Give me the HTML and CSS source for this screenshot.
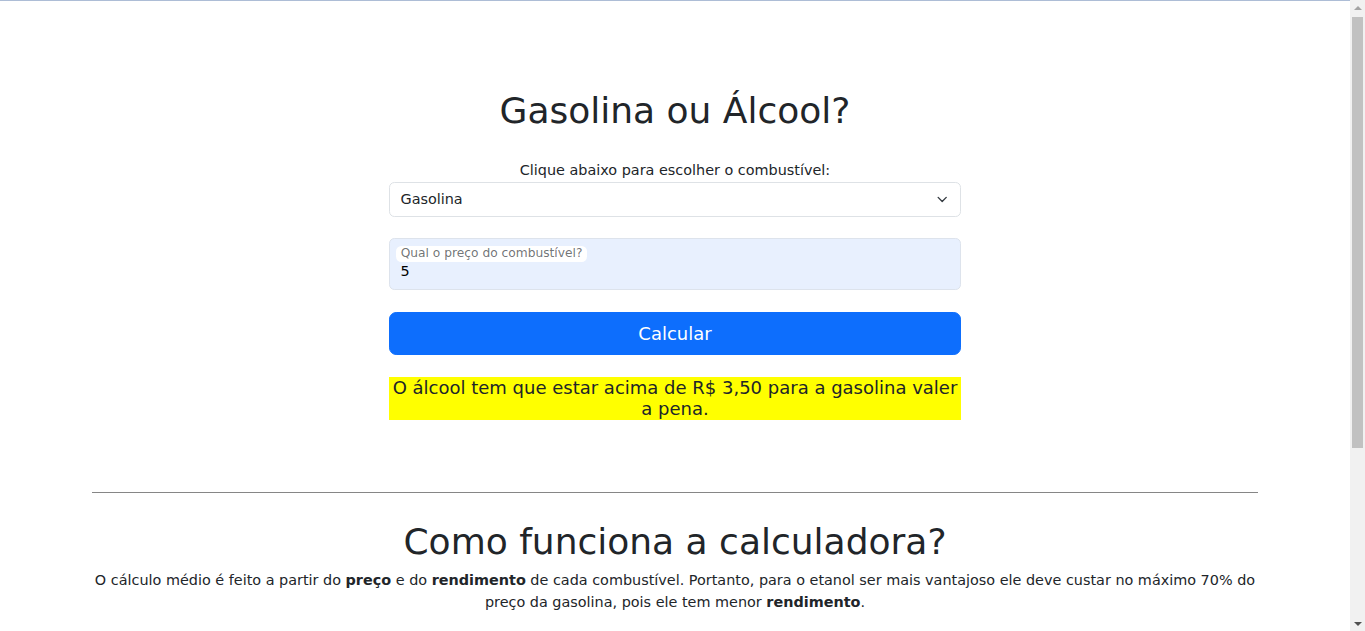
FILE: index.html
```html
<!DOCTYPE html>
<html lang="pt-BR">
<head>
<meta charset="utf-8">
<title>Gasolina ou Álcool?</title>
<link rel="stylesheet" href="styles.css">
</head>
<body>
<main class="page">
  <section class="calc">
    <h1 class="title">Gasolina ou Álcool?</h1>
    <div class="form">
      <label class="form-label">Clique abaixo para escolher o combustível:</label>
      <div class="select">
        <span>Gasolina</span>
        <svg class="chevron" width="14.4" height="10.8" viewBox="0 0 16 16" aria-hidden="true"><path d="m2 5 6 6 6-6" fill="none" stroke="#343a40" stroke-width="2" stroke-linecap="round" stroke-linejoin="round"/></svg>
      </div>
      <div class="floating">
        <span class="floating-label">Qual o preço do combustível?</span>
        <span class="floating-value">5</span>
      </div>
      <button class="btn" type="button">Calcular</button>
      <div class="result">O álcool tem que estar acima de R$ 3,50 para a gasolina valer a pena.</div>
    </div>
  </section>
  <hr class="divider">
  <section class="info">
    <h1 class="title info-title">Como funciona a calculadora?</h1>
    <p class="info-text">O cálculo médio é feito a partir do <strong>preço</strong> e do <strong>rendimento</strong> de cada combustível. Portanto, para o etanol ser mais vantajoso ele deve custar no máximo 70% do preço da gasolina, pois ele tem menor <strong>rendimento</strong>.</p>
  </section>
</main>
<div class="scrollbar" aria-hidden="true">
  <div class="sb-arrow sb-up"></div>
  <div class="sb-track"><div class="sb-thumb"></div></div>
  <div class="sb-arrow sb-down"></div>
</div>
</body>
</html>
```

FILE: styles.css
```css
html, body {
  margin: 0;
  padding: 0;
}

body {
  margin-right: 15px;
  border-top: 1px solid #adbdd6;
  background: #fff;
  color: #212529;
  font-family: "DejaVu Sans", sans-serif;
  font-size: 14.4px;
  line-height: 1.5;
}

.page {
  max-width: 1166.4px;
  margin: 0 auto;
  padding: 88.4px 0 267px;
}

.title {
  margin: 0 0 27.6px;
  font-size: 36px;
  font-weight: 400;
  line-height: 1.2;
  text-align: center;
}

.form {
  width: 572.6px;
  margin: 0 auto;
  display: flex;
  flex-direction: column;
}

.form-label {
  display: block;
  text-align: center;
  line-height: 21.6px;
  margin-bottom: 0.4px;
}

.select {
  display: flex;
  align-items: center;
  justify-content: space-between;
  height: 21.6px;
  padding: 5.4px 10.8px;
  border: 1px solid #dee2e6;
  border-radius: 5.4px;
  line-height: 21.6px;
  margin-bottom: 21.6px;
}

.chevron {
  display: block;
}

.floating {
  display: flex;
  flex-direction: column;
  align-items: flex-start;
  height: 37.2px;
  padding: 7px 6px 6px;
  border: 1px solid #dde3ec;
  border-radius: 5.4px;
  background: #e8f0fe;
  margin-bottom: 21.6px;
}

.floating-label {
  height: 16px;
  padding: 0 5px;
  background: #fff;
  border-radius: 5.4px;
  font-size: 12.24px;
  line-height: 15px;
  color: rgba(33, 37, 41, 0.65);
}

.floating-value {
  padding-left: 4.8px;
  margin-top: -1px;
  line-height: 21.6px;
  color: #000;
}

.btn {
  display: block;
  width: 100%;
  padding: 7.2px 14.4px;
  border: 1px solid #0d6efd;
  border-radius: 7.2px;
  background: #0d6efd;
  color: #fff;
  font-family: inherit;
  font-size: 18px;
  line-height: 27px;
  margin-bottom: 21.6px;
}

.result {
  background: #ffff00;
  font-size: 18px;
  line-height: 21.6px;
  text-align: center;
}

.divider {
  margin: 72.2px 0 0;
  border: 0;
  border-top: 1px solid #868686;
  height: 0;
}

.info-title {
  margin: 27px 0 7px;
}

.info-text {
  margin: 0;
  text-align: center;
  line-height: 21.6px;
}

.info-text strong {
  font-weight: 700;
}

/* browser scrollbar as shown in the reference */
.scrollbar {
  position: fixed;
  top: 0;
  right: 0;
  width: 15px;
  height: 100vh;
  display: flex;
  flex-direction: column;
  background: #f1f1f1;
}

.sb-arrow {
  height: 15px;
  display: flex;
  align-items: center;
  justify-content: center;
}

.sb-up::before,
.sb-down::before {
  content: "";
  width: 0;
  height: 0;
  border-left: 4px solid transparent;
  border-right: 4px solid transparent;
}

.sb-up::before {
  border-bottom: 4px solid #a3a3a3;
}

.sb-down::before {
  border-top: 4px solid #505050;
}

.sb-track {
  flex: 1;
  padding: 2px 2px 0;
}

.sb-thumb {
  height: 431px;
  background: #c1c1c1;
}
```
